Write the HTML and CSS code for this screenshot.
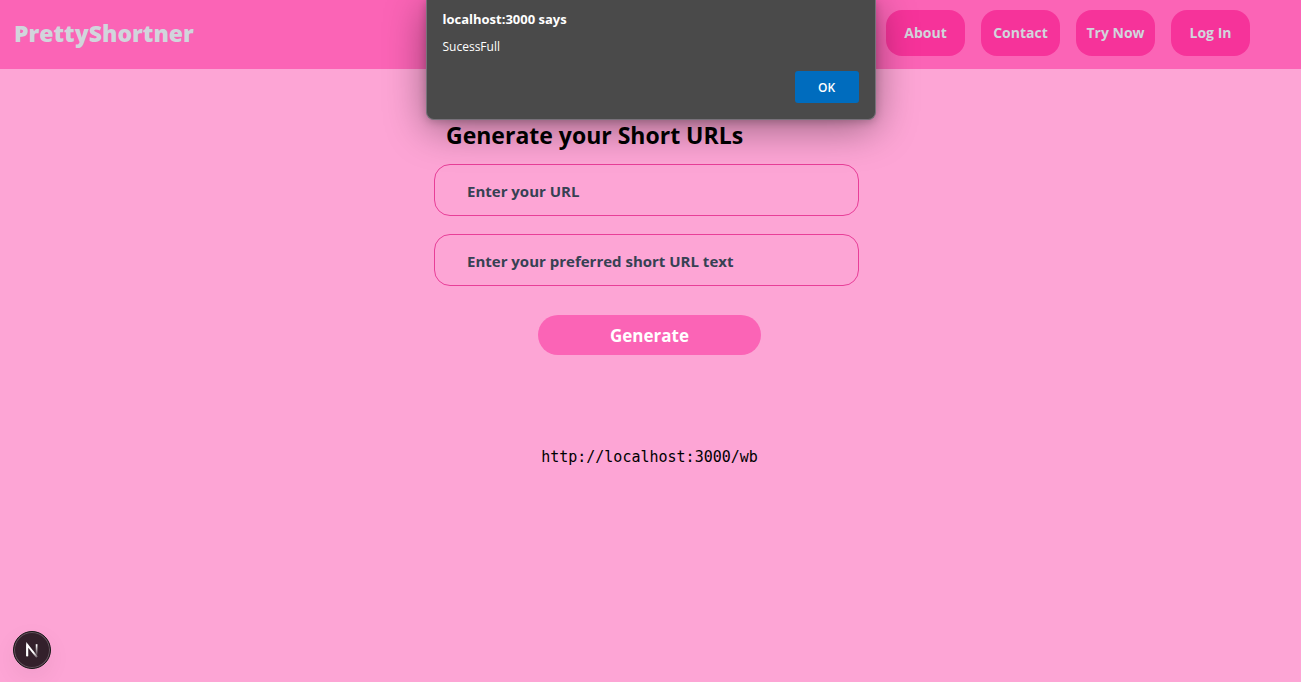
FILE: index.html
```html
<!DOCTYPE html>
<html lang="en">
<head>
  <meta charset="utf-8">
  <meta name="viewport" content="width=device-width, initial-scale=1">
  <title>PrettyShortner</title>
  <link rel="stylesheet" href="styles.css">
</head>
<body>
  <header class="navbar">
    <a class="brand" href="#">PrettyShortner</a>
    <nav class="nav-links">
      <a class="nav-link" href="#">About</a>
      <a class="nav-link" href="#">Contact</a>
      <a class="nav-link" href="#">Try Now</a>
      <a class="nav-link" href="#">Log In</a>
    </nav>
  </header>

  <main class="page">
    <form class="generator">
      <h1 class="title">Generate your Short URLs</h1>
      <input class="field" type="text" placeholder="Enter your URL" aria-label="Enter your URL">
      <input class="field" type="text" placeholder="Enter your preferred short URL text" aria-label="Enter your preferred short URL text">
      <button class="submit" type="button">Generate</button>
    </form>
    <code class="result">http://localhost:3000/wb</code>
  </main>

  <dialog class="alert" open aria-labelledby="alert-title">
    <h2 class="alert-title" id="alert-title">localhost:3000 says</h2>
    <p class="alert-text">SucessFull</p>
    <button class="alert-ok" type="button">OK</button>
  </dialog>

  <button class="dev-badge" type="button" aria-label="Open Next.js dev tools">
    <svg width="36" height="36" viewBox="0 0 36 36" fill="none" aria-hidden="true">
      <defs>
        <linearGradient id="diag" x1="20" y1="20" x2="25" y2="27" gradientUnits="userSpaceOnUse">
          <stop stop-color="#fff"/>
          <stop offset="1" stop-color="#fff" stop-opacity="0"/>
        </linearGradient>
        <linearGradient id="stem" x1="23" y1="13" x2="23" y2="24" gradientUnits="userSpaceOnUse">
          <stop stop-color="#fff"/>
          <stop offset="1" stop-color="#fff" stop-opacity="0"/>
        </linearGradient>
      </defs>
      <path d="M13.2 24V12.8L23 25.2" stroke="url(#diag)" stroke-width="1.9"/>
      <path d="M13.2 24.4V12.4" stroke="#fff" stroke-width="1.8"/>
      <path d="M22.6 12.2V23.4" stroke="url(#stem)" stroke-width="1.7"/>
    </svg>
  </button>
</body>
</html>
```
FILE: styles.css
```css
* {
  box-sizing: border-box;
}

body {
  margin: 0;
  min-height: 100vh;
  background: #fda5d5;
  color: #000;
  font-family: "Open Sans", "Noto Sans", sans-serif;
}

button,
input {
  font-family: inherit;
}

.navbar {
  display: flex;
  align-items: center;
  justify-content: space-between;
  padding: 10px 51px 13px 14px;
  background: #fb64b6;
}

.brand {
  color: #d1d5dc;
  font-size: 23px;
  font-weight: 800;
  line-height: 32px;
  text-decoration: none;
}

.nav-links {
  display: flex;
  gap: 16px;
}

.nav-link {
  min-width: 79px;
  padding: 11px 8px;
  border-radius: 16px;
  background: #f6339a;
  color: #d1d5dc;
  font-size: 14px;
  font-weight: 700;
  line-height: 24px;
  text-align: center;
  text-decoration: none;
}

.page {
  display: flex;
  flex-direction: column;
  align-items: center;
  padding: 51px 18px 32px 16px;
}

.generator {
  display: flex;
  flex-direction: column;
  gap: 18px;
  width: 100%;
  max-width: 431px;
}

.title {
  margin: 0 0 -4px;
  padding-left: 12px;
  font-size: 23px;
  font-weight: 700;
  line-height: 30px;
}

.field {
  height: 52px;
  margin-right: 6px;
  padding: 1px 32px 0;
  border: 1px solid #e83e98;
  border-radius: 16px;
  background: transparent;
  font-size: 15px;
  font-weight: 700;
}

.field::placeholder {
  color: #364153;
  opacity: 1;
}

.submit {
  align-self: center;
  width: 223px;
  height: 40px;
  margin-top: 11px;
  padding: 0;
  border: 0;
  border-radius: 20px;
  background: #fb64b6;
  color: #fff;
  font-size: 17px;
  font-weight: 700;
}

.result {
  margin-top: 90px;
  font-family: "DejaVu Sans Mono", monospace;
  font-size: 15px;
  line-height: 24px;
}

.alert {
  position: absolute;
  top: 0;
  right: 0;
  left: 0;
  display: flex;
  flex-direction: column;
  width: 450px;
  margin: 0 auto;
  padding: 9px 16px 16px;
  border: 1px solid #77727a;
  border-top: 0;
  border-radius: 0 0 8px 8px;
  background: #4a4a4a;
  box-shadow: 0 8px 40px rgba(0, 0, 0, 0.4), 0 2px 8px rgba(0, 0, 0, 0.2);
  color: #fff;
}

.alert-title {
  margin: 0;
  font-size: 13px;
  font-weight: 700;
  line-height: 20px;
}

.alert-text {
  margin: 8px 0 14px;
  font-size: 12px;
  line-height: 20px;
}

.alert-ok {
  align-self: flex-end;
  width: 64px;
  height: 32px;
  padding: 0;
  border: 0;
  border-radius: 3px;
  background: #006cbe;
  color: #fff;
  font-size: 12px;
  font-weight: 600;
}

.dev-badge {
  position: fixed;
  bottom: 13px;
  left: 13px;
  width: 38px;
  height: 38px;
  padding: 0;
  border: 1px solid #171717;
  border-radius: 50%;
  background: #33202b;
  box-shadow: inset 0 0 0 1px #66545f, 0 8px 24px rgba(0, 0, 0, 0.06);
}

.dev-badge svg {
  display: block;
}
```
